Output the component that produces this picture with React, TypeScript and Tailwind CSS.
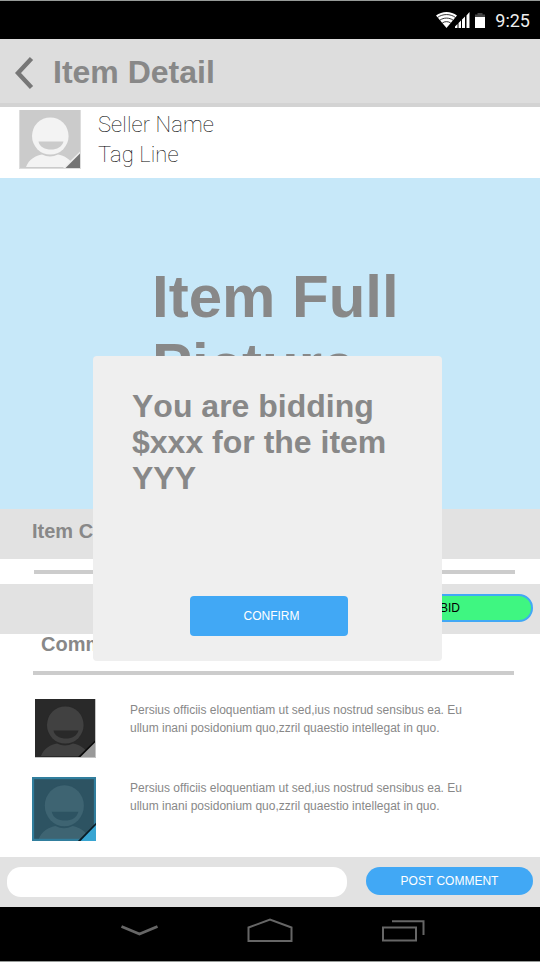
type AvatarProps = {
  bg: string;
  figure: string;
  corner: string;
  fold: string;
  className: string;
  frame?: string;
};

function Avatar({ bg, figure, corner, fold, className, frame }: AvatarProps) {
  return (
    <svg viewBox="0 0 60 58" preserveAspectRatio="none" className={className} aria-hidden="true">
      <rect width="60" height="58" fill={bg} />
      <path d="M6 57C9 49 16 45.500 22 44.500Q30 48.500 38 44.500C44 45.500 51 49 54 57Z" fill={figure} />
      <ellipse cx="30.300" cy="26" rx="19" ry="19.400" fill={bg} />
      <ellipse cx="30.300" cy="26" rx="18.300" ry="18.600" fill={figure} />
      <path d="M18.500 31.500H43.500C42 37 37 39.500 31 39.500S19.500 37 18.500 31.500Z" fill={bg} />
      {frame && <rect x="1" y="1" width="58" height="56" fill="none" stroke={frame} strokeWidth="2" />}
      <path d="M43 58 60 41.500V58Z" fill={fold} />
      <path d="M45.500 58 60 43.500V58Z" fill={corner} />
    </svg>
  );
}

function StatusBar() {
  return (
    <div className="flex h-[39px] items-start justify-end border-t border-[#969a98] bg-black pr-[10px]">
      <svg className="mt-[10px] h-[18px] w-[52px]" viewBox="0 0 52 18" aria-hidden="true">
        <path d="M10.500 17 0 4.600C6-.2 15-.2 21 4.600Z" fill="#fff" />
        <g fill="none" stroke="#000" strokeWidth=".8">
          <path d="M1.500 6.500C6.500 2.600 14.500 2.600 19.500 6.500" />
          <path d="M3.900 9.200C7.400 6.400 13.600 6.400 17.100 9.200" />
          <path d="M6.300 12C8.500 10.200 12.500 10.200 14.700 12" />
        </g>
        <path d="M19 17V15.500L21.500 13V17ZM22.500 17V12L25 9.500V17ZM26 17V8.500L29 5.500V17ZM30.500 17V4.500L33.500 1V17Z" fill="#fff" />
        <path d="M41.500 2h5v1.500H49V7H39V3.500h2.500Z" fill="#444" />
        <path d="M39 6h10v11H39Z" fill="#fff" />
      </svg>
      <span className="ml-[4px] mt-[9px] w-[38px] whitespace-nowrap text-right font-[Roboto,sans-serif] text-[18px] leading-[22px] text-[#eee]">9:25</span>
    </div>
  );
}

function Comment({ teal = false }: { teal?: boolean }) {
  return (
    <article className="flex h-[78px]">
      <div className="w-[130px] shrink-0">
        {teal ? (
          <Avatar bg="#2d5362" figure="#3e6472" corner="#38a5d2" fold="#091b25" frame="#317e9d" className="ml-8 h-16 w-16" />
        ) : (
          <Avatar bg="#292929" figure="#414141" corner="#999" fold="#080808" className="ml-[35px] h-[59px] w-[61px] border-b border-r border-[#c5c5c5]" />
        )}
      </div>
      <p className="mt-[2px] whitespace-nowrap text-xs leading-[18px] text-[#888]">
        Persius officiis eloquentiam ut sed,ius nostrud sensibus ea. Eu
        <br />
        ullum inani posidonium quo,zzril quaestio intellegat in quo.
      </p>
    </article>
  );
}

function BidDialog() {
  return (
    <div role="dialog" aria-label="Confirm bid" className="absolute left-[93px] top-[356px] flex h-[305px] w-[349px] flex-col rounded bg-[#efefef]">
      <h2 className="ml-[39px] mt-8 whitespace-nowrap text-[32px] font-bold leading-9 text-[#888] [font-kerning:none]">
        You are bidding
        <br />
        $xxx for the item
        <br />
        YYY
      </h2>
      <button className="mb-[25px] ml-[97px] mt-auto h-10 w-[158px] rounded bg-[#41a8f5] pl-[5px] text-xs text-white">CONFIRM</button>
    </div>
  );
}

export default function App() {
  return (
    <div className="relative flex h-[962px] w-[540px] flex-col overflow-hidden bg-white font-['Liberation_Sans',Arial,sans-serif]">
      <StatusBar />
      <header className="flex h-[68px] items-start border-b-4 border-[#d3d3d3] bg-[#ddd]">
        <svg className="ml-[14px] mt-[18px] h-8 w-5" viewBox="0 0 20 32" aria-hidden="true">
          <path d="M17.500 1.500 4 16 17.500 30.500" fill="none" stroke="#777" strokeWidth="4.400" />
        </svg>
        <h1 className="ml-[19px] mt-[15px] text-[32px] font-bold leading-9 text-[#888]">Item Detail</h1>
      </header>
      <section className="flex h-[71px] items-start">
        <Avatar bg="#cbcbcb" figure="#f3f3f3" corner="#747474" fold="#eee" className="ml-[19px] mt-[3px] h-[59px] w-[62px] border border-t-0 border-[#ddd]" />
        <div className="ml-[17px] mt-[3px] font-[Roboto,sans-serif] text-[22px] font-thin leading-[30px] tracking-[0.1px] text-black">
          <p>Seller Name</p>
          <p>Tag Line</p>
        </div>
      </section>
      <section className="h-[331px] bg-[#c7e8f9] pl-[152px] pt-[85px]">
        <h2 className="text-[60px] font-bold leading-[68px] text-[#888]">Item Full<br />Picture</h2>
      </section>
      <div className="h-[50px] bg-[#e2e2e2] pl-8 pt-[10px] text-xl font-bold leading-6 text-[#888]">Item C</div>
      <div className="flex h-[25px] items-center pl-[34px]"><div className="h-1 w-[481px] bg-[#ccc]" /></div>
      <div className="flex h-[50px] items-start justify-end bg-[#e2e2e2] pr-[7px] pt-[10px]">
        <button className="h-7 w-[167px] rounded-[14px] border-2 border-[#41a8f5] bg-[#3ff681] pl-px text-xs text-black">BID</button>
      </div>
      <section className="h-[65px] bg-white">
        <h2 className="ml-[41px] h-[37px] text-xl font-bold leading-5 text-[#888]">Comm</h2>
        <div className="ml-[33px] h-1 w-[481px] bg-[#ccc]" />
      </section>
      <main className="h-[158px]">
        <Comment />
        <Comment teal />
      </main>
      <footer className="flex h-[50px] items-start bg-[#e2e2e2] pl-[7px] pt-[10px]">
        <input aria-label="Comment" className="h-[30px] w-[340px] rounded-[14px] bg-white px-3 text-xs outline-none" />
        <button className="ml-[19px] h-7 w-[167px] rounded-[14px] bg-[#41a8f5] text-xs text-white">POST COMMENT</button>
      </footer>
      <nav className="h-[55px] border-b border-[#969a98] bg-black">
        <svg className="h-[54px] w-[540px]" viewBox="0 0 540 54" fill="none" stroke="#666" strokeWidth="2" aria-hidden="true">
          <path d="M121.500 19.500 139.500 27 157.500 19.500" strokeWidth="2.800" />
          <path d="M248.500 34V20.500L270 12.500 291.500 20.500V34Z" />
          <path d="M383 20.500H416V33.500H383ZM392 14.200H423.500V28" />
        </svg>
      </nav>
      <BidDialog />
    </div>
  );
}
